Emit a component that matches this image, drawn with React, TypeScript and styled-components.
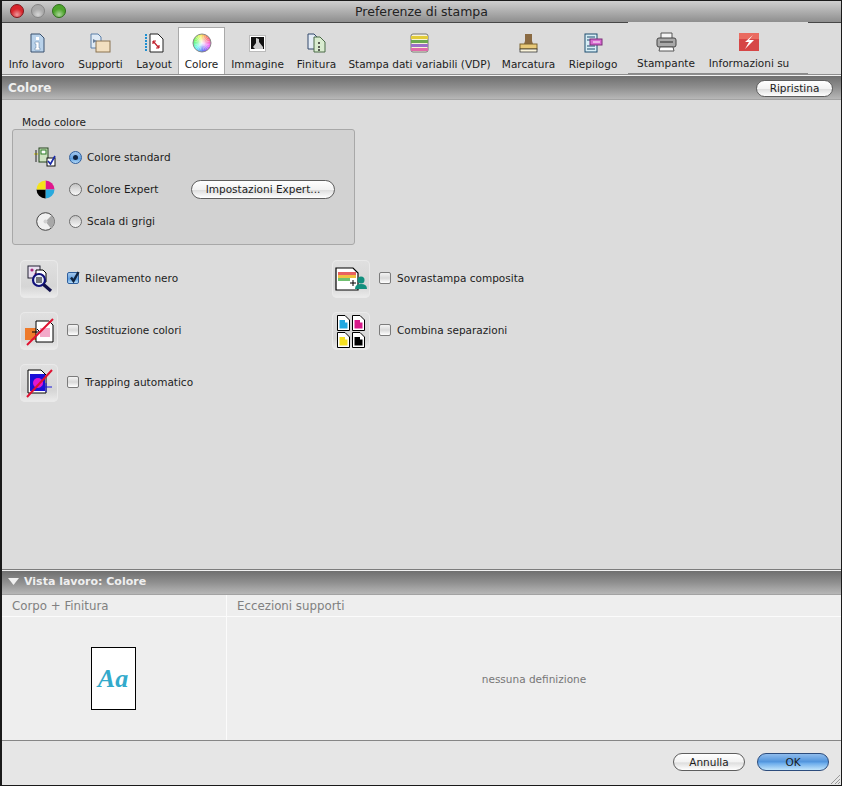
import React from 'react';
import styled, { createGlobalStyle } from 'styled-components';

const GlobalStyle = createGlobalStyle`
  html, body { margin: 0; padding: 0; background: #000; }
  body { font-family: "DejaVu Sans", "Liberation Sans", sans-serif; font-size: 10.5px; color: #1c1c1c; }
`;

const Window = styled.div`
  width: 842px;
  height: 786px;
  box-sizing: border-box;
  display: flex;
  flex-direction: column;
  border: solid #1a1a1a;
  border-width: 1px 1px 1px 2px;
  background: #dcdcdc;
  overflow: hidden;
`;

const TitleBar = styled.div`
  position: relative;
  flex: 0 0 22px;
  box-sizing: border-box;
  display: flex;
  align-items: center;
  justify-content: center;
  background: linear-gradient(#cfcfcf, #a8a8a8 60%, #8e8e8e);
  border-bottom: 1px solid #474747;
  font-size: 12.5px;
  color: #222;
`;

const Lights = styled.div`
  position: absolute;
  left: 8px;
  top: 3px;
  display: flex;
  gap: 7px;
`;

const Light = styled.span<{ $c: string; $d: string }>`
  width: 14px;
  height: 14px;
  border-radius: 50%;
  box-sizing: border-box;
  border: 1px solid ${p => p.$d};
  background: radial-gradient(circle at 50% 80%, #fff8 0, transparent 50%), ${p => p.$c};
`;

const Toolbar = styled.div`
  flex: 0 0 52px;
  box-sizing: border-box;
  display: flex;
  background: #dcdcdc;
  border-bottom: 1px solid #8e8e8e;
`;

const Tab = styled.div<{ $active?: boolean; $w: number }>`
  width: ${p => p.$w}px;
  display: flex;
  flex-direction: column;
  align-items: center;
  box-sizing: border-box;
  margin-top: ${p => (p.$active ? 4 : 0)}px;
  padding-top: ${p => (p.$active ? 4 : 9)}px;
  white-space: nowrap;
  ${p => p.$active && 'background: #fff; border: solid #a9a9a9; border-width: 1px 1px 0;'}
`;

const TabIcon = styled.div`
  height: 22px;
  display: flex;
  align-items: center;
  justify-content: center;
`;

const TabLabel = styled.div`
  line-height: 14px;
  margin-top: 3px;
`;

const PrinterGroup = styled.div`
  position: relative;
  display: flex;
  width: 180px;
  margin-left: 3px;
  margin-top: -1px;
  box-sizing: border-box;
  background: #dcdcdc;
  border-bottom: 1px solid #8a8a8a;
  & ${Tab} { padding-top: 9px; }
`;

const SectionBar = styled.div<{ $h: number; $ruled?: boolean }>`
  position: relative;
  flex: 0 0 ${p => p.$h}px;
  box-sizing: border-box;
  display: flex;
  align-items: center;
  justify-content: space-between;
  padding: ${p => (p.$ruled ? 0 : 1)}px 8px 0 6px;
  background: linear-gradient(#6f6f6f, #8f8f8f 50%, #b7b7b7);
  border-top: 1px solid #f2f2f2;
  border-bottom: 1px solid #a3a3a3;
  ${p => p.$ruled && 'box-shadow: 0 -1px 0 #7c7c7c;'}
  font-weight: bold;
  font-size: 12px;
  color: #efefef;
`;

const BarTitle = styled.span`
  display: flex;
  align-items: center;
  gap: 5px;
  font-size: 11px;
  padding-bottom: 2px;
`;

const PillButton = styled.button<{ $w: number; $h?: number; $primary?: boolean }>`
  width: ${p => p.$w}px;
  height: ${p => p.$h ?? 18}px;
  padding: 0;
  font: 10.5px "DejaVu Sans", sans-serif;
  color: #1c1c1c;
  border-radius: 10px;
  border: 1px solid ${p => (p.$primary ? '#2c4c7c' : '#5e5e5e')};
  background: ${p =>
    p.$primary
      ? 'linear-gradient(#8fbcec, #4f93dc 50%, #66a8ea 55%, #c0e4fb)'
      : 'linear-gradient(#ffffff, #f2f2f2 50%, #dedede 55%, #ffffff)'};
`;

const Main = styled.div`
  flex: 1;
  padding: 15px 0 0 10px;
  display: flex;
  flex-direction: column;
`;

const GroupLabel = styled.div`
  margin-left: 10px;
  line-height: 14px;
`;

const GroupBox = styled.div`
  width: 343px;
  height: 116px;
  box-sizing: border-box;
  padding: 16px 0 0 18px;
  background: #d2d2d2;
  border: 1px solid #a8a8a8;
  border-radius: 3px;
  display: flex;
  flex-direction: column;
  gap: 10px;
`;

const ModeRow = styled.div`
  height: 22px;
  display: flex;
  align-items: center;
`;

const ModeIcon = styled.div`
  width: 28px;
  display: flex;
  justify-content: center;
  margin-right: 10px;
`;

const Radio = styled.span<{ $on?: boolean }>`
  position: relative;
  width: 13px;
  height: 13px;
  border-radius: 50%;
  box-sizing: border-box;
  border: 1px solid ${p => (p.$on ? '#2f5f9e' : '#6d6d6d')};
  background: ${p =>
    p.$on ? 'linear-gradient(#a5c8ec, #5f9fe0 60%, #b6dcf8)' : 'linear-gradient(#c4c4c4, #f8f8f8)'};
  margin-right: 5px;
  &::after {
    content: '';
    display: ${p => (p.$on ? 'block' : 'none')};
    position: absolute;
    left: 3px;
    top: 3px;
    width: 5px;
    height: 5px;
    border-radius: 50%;
    background: #10233f;
  }
`;

const ModeLabel = styled.span`
  width: 104px;
`;

const Options = styled.div`
  margin: 15px 0 0 8px;
  display: grid;
  grid-template-columns: 312px 1fr;
  row-gap: 14px;
`;

const Option = styled.div`
  display: flex;
  align-items: center;
  height: 38px;
`;

const OptionText = styled.div`
  display: flex;
  align-items: center;
  padding-bottom: 2px;
`;

const Well = styled.div`
  width: 38px;
  height: 38px;
  margin-right: 9px;
  display: flex;
  align-items: center;
  justify-content: center;
  border-radius: 5px;
  background: linear-gradient(#e0e0e0, #d6d6d6 70%, #ececec);
  box-shadow: inset 0 0 0 1px #e9e9e9;
`;

const Check = styled.span<{ $on?: boolean }>`
  position: relative;
  width: 12px;
  height: 12px;
  box-sizing: border-box;
  margin-right: 6px;
  border: 1px solid ${p => (p.$on ? '#2f5f9e' : '#7b7b7b')};
  border-radius: 2px;
  background: ${p =>
    p.$on ? 'linear-gradient(#a5c8ec, #5f9fe0 60%, #b6dcf8)' : 'linear-gradient(#f4f4f4, #d9d9d9 50%, #fff)'};
  & svg { position: absolute; left: 0; top: -3px; }
`;

const Preview = styled.div`
  flex: 0 0 145px;
  display: grid;
  grid-template-columns: 225px 1fr;
  grid-template-rows: 22px 1fr;
  background: #eeeeee;
`;

const HeadCell = styled.div`
  padding-left: 10px;
  line-height: 22px;
  font-size: 11.8px;
  color: #808080;
  border-bottom: 1px solid #fbfbfb;
  border-right: 1px solid #fbfbfb;
  &:nth-child(2) { border-right: 0; }
`;

const PageCell = styled.div`
  display: flex;
  align-items: center;
  justify-content: center;
  padding-right: 2px;
  border-right: 1px solid #fbfbfb;
`;

const Page = styled.div`
  width: 45px;
  height: 63px;
  box-sizing: border-box;
  border: 1px solid #000;
  background: #fff;
  display: flex;
  align-items: center;
  justify-content: center;
  font: italic bold 26px "Liberation Serif", serif;
  color: #33aacb;
`;

const EmptyCell = styled.div`
  display: flex;
  align-items: center;
  justify-content: center;
  color: #777;
`;

const Footer = styled.div`
  position: relative;
  flex: 0 0 45px;
  box-sizing: border-box;
  display: flex;
  justify-content: flex-end;
  align-items: flex-start;
  gap: 12px;
  padding: 12px 12px 0 0;
  background: #e6e6e6;
  border-top: 1px solid #868686;
`;

const Grip = styled.svg`
  position: absolute;
  right: 0;
  bottom: 0;
`;

const tick = (
  <svg width="14" height="14" viewBox="0 0 14 14">
    <path d="M3 7.5 L5.5 11 L10.5 2" fill="none" stroke="#10233f" strokeWidth="2.4" />
  </svg>
);

const Doc = ({ x, y, fill }: { x: number; y: number; fill: string }) => (
  <g transform={`translate(${x} ${y})`}>
    <path d="M.5.5H8L12.5 5V15.5H.5Z" fill="#fff" stroke="#000" />
    <path d="M2.5 5H8V7.5H10.5V13.5H2.5Z" fill={fill} />
  </g>
);

// colour wheel sectors, hue runs backwards from orange at the top
const wheelSectors = Array.from({ length: 24 }, (_, i) => {
  const a0 = ((i * 15 - 90) * Math.PI) / 180;
  const a1 = (((i + 1) * 15 - 90) * Math.PI) / 180;
  const d = `M10 10L${10 + 9 * Math.cos(a0)} ${10 + 9 * Math.sin(a0)}A9 9 0 0 1 ${10 + 9 * Math.cos(a1)} ${10 + 9 * Math.sin(a1)}Z`;
  return <path key={i} d={d} fill={`hsl(${40 - i * 15} 90% 65%)`} />;
});

const icons = {
  info: (
    <svg width="18" height="20" viewBox="0 0 18 20">
      <path d="M3 1H12L16 5V19H3Z" fill="#b9d2ea" stroke="#38506e" />
      <rect x="8" y="4" width="3" height="3" fill="#fff" />
      <path d="M7 9H11V15H12V17H7V15H8V11H7Z" fill="#fff" stroke="#5c7ea3" strokeWidth=".5" />
    </svg>
  ),
  media: (
    <svg width="21" height="20" viewBox="0 0 21 20">
      <path d="M1 1H8L11 4V15H1Z" fill="#dfeaf5" stroke="#5b7fa8" />
      <rect x="6" y="8" width="14" height="11" fill="#f2dfc0" stroke="#8a7350" />
      <path d="M3 6L7 8L3 10Z" fill="#6a7f9a" />
    </svg>
  ),
  layout: (
    <svg width="19" height="20" viewBox="0 0 19 20">
      <path d="M1 1V18" stroke="#1f8fd0" strokeWidth="2" strokeDasharray="2 1" />
      <path d="M5 1H13L18 6V19H5Z" fill="#fff" stroke="#222" />
      <path d="M8 8L14 15M8 8V11M8 8H11M14 15V12M14 15H11" stroke="#c0202c" strokeWidth="1.2" fill="none" />
    </svg>
  ),
  color: (
    <svg width="20" height="20" viewBox="0 0 20 20">
      <defs>
        <radialGradient id="pale">
          <stop offset="0" stopColor="#fff" stopOpacity=".9" />
          <stop offset="1" stopColor="#fff" stopOpacity="0" />
        </radialGradient>
      </defs>
      {wheelSectors}
      <circle cx="10" cy="10" r="9" fill="url(#pale)" stroke="#8a8a8a" />
    </svg>
  ),
  image: (
    <svg width="17" height="17" viewBox="0 0 17 17">
      <rect x=".5" y=".5" width="16" height="16" fill="#fff" stroke="#bbb" />
      <rect x="2" y="2" width="13" height="12" fill="#111" />
      <path d="M7 3L10 4L10 7L14 12V14H6L4 12L7 8Z" fill="#ccc" />
    </svg>
  ),
  finish: (
    <svg width="19" height="20" viewBox="0 0 19 20">
      <path d="M1 1H7L10 4V16H1Z" fill="#e4ecf6" stroke="#33486a" />
      <path d="M7 4H13L18 9V19H7Z" fill="#d9ecd0" stroke="#4a6a46" />
      <path d="M12 9V11M12 13V15M12 16V18" stroke="#222" strokeWidth="1.4" />
    </svg>
  ),
  vdp: (
    <svg width="19" height="20" viewBox="0 0 19 20">
      <rect x="1" y="1" width="17" height="18" rx="2" fill="#f7f3d8" stroke="#777" />
      <rect x="1" y="3" width="17" height="3" fill="#e2cc3a" />
      <rect x="1" y="7" width="17" height="3" fill="#6aa84f" />
      <rect x="1" y="11" width="17" height="3" fill="#9a6fc8" />
      <rect x="1" y="15" width="17" height="3" fill="#e06aa8" />
    </svg>
  ),
  stamp: (
    <svg width="19" height="20" viewBox="0 0 19 20">
      <path d="M6 1H13V8L14 11H5L6 8Z" fill="#8a6a42" />
      <rect x="1" y="11" width="17" height="5" fill="#e8c978" stroke="#7d6530" />
      <rect x="1" y="16" width="17" height="3" fill="#fbf5dc" stroke="#222" strokeWidth=".7" />
    </svg>
  ),
  summary: (
    <svg width="19" height="20" viewBox="0 0 19 20">
      <rect x="1" y="1" width="12" height="18" fill="#d8eef5" stroke="#1d4c6e" />
      <path d="M3 4H11M3 7H8M3 13H11M3 16H11" stroke="#1d4c6e" />
      <rect x="6" y="6" width="12" height="6" fill="#d86ad0" stroke="#7a2c78" />
      <path d="M9 9H16" stroke="#fff" />
    </svg>
  ),
  printer: (
    <svg width="21" height="20" viewBox="0 0 21 20">
      <path d="M5 7V1H16V7" fill="#f4f4f4" stroke="#555" />
      <rect x="1" y="6" width="19" height="9" rx="2" fill="#a9a9a9" stroke="#444" />
      <path d="M4 10H17" stroke="#555" strokeWidth="1.5" />
      <path d="M4 15H17L18 19H3Z" fill="#fff" stroke="#555" />
    </svg>
  ),
  about: (
    <svg width="20" height="18" viewBox="0 0 20 18">
      <rect x="0" y="0" width="20" height="18" fill="#d64646" />
      <rect x="0" y="0" width="20" height="6" fill="#ea6b60" />
      <path d="M14 2L6 9H10L6 16L15 7H10Z" fill="#fff" />
    </svg>
  ),
  standard: (
    <svg width="22" height="20" viewBox="0 0 22 20">
      <path d="M0 7H4" stroke="#d8d020" strokeWidth="1.2" />
      <path d="M2 3V15" stroke="#222" />
      <rect x="5" y="1" width="9" height="14" fill="#cfe3c2" stroke="#24451c" />
      <rect x="7" y="3" width="5" height="4" fill="#fff" stroke="#2a7a22" />
      <rect x="13" y="11" width="8" height="8" fill="#fff" stroke="#111" />
      <path d="M14 14L16.5 17L21 9" stroke="#1a2aa8" strokeWidth="1.6" fill="none" />
    </svg>
  ),
  cmyk: (
    <svg width="19" height="19" viewBox="0 0 19 19">
      <path d="M9.5 9.5V.5A9 9 0 0 1 18.5 9.5Z" fill="#e0168c" />
      <path d="M9.5 9.5H18.5A9 9 0 0 1 9.5 18.5Z" fill="#29a9dd" />
      <path d="M9.5 9.5V18.5A9 9 0 0 1 .5 9.5Z" fill="#000" />
      <path d="M9.5 9.5H.5A9 9 0 0 1 9.5 .5Z" fill="#f5e31a" />
    </svg>
  ),
  gray: (
    <svg width="19" height="19" viewBox="0 0 19 19">
      <circle cx="9.5" cy="9.5" r="8.8" fill="#f0f0f0" stroke="#444" />
      <path d="M9.5 9.5L15.7 3.3A8.8 8.8 0 0 1 15 16.4Z" fill="#a8a8a8" />
      <circle cx="9.5" cy="9.5" r="2" fill="#d0d0d0" />
    </svg>
  ),
  black: (
    <svg width="28" height="28" viewBox="0 0 28 28">
      <rect x="3" y="1" width="12" height="12" fill="#e9dff0" stroke="#223" />
      <circle cx="7" cy="5" r="1.6" fill="#a8287c" />
      <circle cx="11" cy="9" r="1.6" fill="#a8287c" />
      <path d="M11 5H18L21 8V17H11Z" fill="#fff" stroke="#000" />
      <circle cx="14" cy="15" r="6" fill="#e8eef8" stroke="#10107a" strokeWidth="2.2" />
      <path d="M11 13H17M11 15H17M11 17H17" stroke="#000" />
      <path d="M18.5 19.5L26 26" stroke="#10104a" strokeWidth="3.2" />
    </svg>
  ),
  substitute: (
    <svg width="32" height="30" viewBox="0 0 32 30">
      <rect x="2" y="12" width="14" height="12" fill="#ee7a2a" />
      <path d="M13 5H26L30 9V26H13Z" fill="#fff" stroke="#000" />
      <rect x="17" y="12" width="10" height="9" fill="#f3a9c9" />
      <path d="M9 16H17M14 13L17 16L14 19" stroke="#000" fill="none" />
      <path d="M4 29L30 3" stroke="#e01030" strokeWidth="2" />
    </svg>
  ),
  trapping: (
    <svg width="28" height="32" viewBox="0 0 28 32">
      <path d="M3 3H16L21 8V26H3Z" fill="#fff" stroke="#000" />
      <rect x="5" y="7" width="15" height="17" fill="#1a10d8" />
      <circle cx="13" cy="16" r="5" fill="#e018d0" />
      <path d="M16 20H27M21 16V25" stroke="#1a1ad8" />
      <path d="M2 30L27 3" stroke="#e01030" strokeWidth="2" />
    </svg>
  ),
  overprint: (
    <svg width="32" height="28" viewBox="0 0 32 28">
      <path d="M1 3H18L23 8V25H1Z" fill="#fff" stroke="#000" strokeWidth="1.2" />
      <rect x="3" y="7" width="18" height="3" fill="#e86060" />
      <rect x="3" y="10" width="18" height="3" fill="#f0c040" />
      <rect x="3" y="13" width="12" height="3" fill="#70c070" />
      <path d="M15 18H21M18 15V21" stroke="#000" />
      <circle cx="26" cy="15" r="3.5" fill="#12907e" />
      <path d="M20 24Q20 19 26 19Q32 19 32 24Z" fill="#12907e" />
    </svg>
  ),
  combine: (
    <svg width="30" height="34" viewBox="0 0 30 34">
      <Doc x={1} y={1} fill="#22a8e0" />
      <Doc x={16} y={1} fill="#d81a8a" />
      <Doc x={1} y={18} fill="#f5e020" />
      <Doc x={16} y={18} fill="#000" />
    </svg>
  ),
};

const App = () => (
  <>
    <GlobalStyle />
    <Window>
      <TitleBar>
        <Lights>
          <Light $c="#d8252c" $d="#7d1a1e" />
          <Light $c="#a9a9a9" $d="#858585" />
          <Light $c="#4ea52c" $d="#2f6e1e" />
        </Lights>
        Preferenze di stampa
      </TitleBar>
      <Toolbar>
        <Tab $w={69}><TabIcon>{icons.info}</TabIcon><TabLabel>Info lavoro</TabLabel></Tab>
        <Tab $w={59}><TabIcon>{icons.media}</TabIcon><TabLabel>Supporti</TabLabel></Tab>
        <Tab $w={48}><TabIcon>{icons.layout}</TabIcon><TabLabel>Layout</TabLabel></Tab>
        <Tab $w={47} $active><TabIcon>{icons.color}</TabIcon><TabLabel>Colore</TabLabel></Tab>
        <Tab $w={65}><TabIcon>{icons.image}</TabIcon><TabLabel>Immagine</TabLabel></Tab>
        <Tab $w={53}><TabIcon>{icons.finish}</TabIcon><TabLabel>Finitura</TabLabel></Tab>
        <Tab $w={153}><TabIcon>{icons.vdp}</TabIcon><TabLabel>Stampa dati variabili (VDP)</TabLabel></Tab>
        <Tab $w={65}><TabIcon>{icons.stamp}</TabIcon><TabLabel>Marcatura</TabLabel></Tab>
        <Tab $w={64}><TabIcon>{icons.summary}</TabIcon><TabLabel>Riepilogo</TabLabel></Tab>
        <PrinterGroup>
          <Tab $w={76}><TabIcon>{icons.printer}</TabIcon><TabLabel>Stampante</TabLabel></Tab>
          <Tab $w={90}><TabIcon>{icons.about}</TabIcon><TabLabel>Informazioni su</TabLabel></Tab>
        </PrinterGroup>
      </Toolbar>
      <SectionBar $h={25}>
        Colore
        <PillButton $w={77} $h={17}>Ripristina</PillButton>
      </SectionBar>
      <Main>
        <GroupLabel>Modo colore</GroupLabel>
        <GroupBox>
          <ModeRow>
            <ModeIcon>{icons.standard}</ModeIcon>
            <Radio $on />
            <ModeLabel>Colore standard</ModeLabel>
          </ModeRow>
          <ModeRow>
            <ModeIcon>{icons.cmyk}</ModeIcon>
            <Radio />
            <ModeLabel>Colore Expert</ModeLabel>
            <PillButton $w={144} $h={19}>Impostazioni Expert...</PillButton>
          </ModeRow>
          <ModeRow>
            <ModeIcon>{icons.gray}</ModeIcon>
            <Radio />
            <ModeLabel>Scala di grigi</ModeLabel>
          </ModeRow>
        </GroupBox>
        <Options>
          <Option><Well>{icons.black}</Well><OptionText><Check $on>{tick}</Check>Rilevamento nero</OptionText></Option>
          <Option><Well>{icons.overprint}</Well><OptionText><Check />Sovrastampa composita</OptionText></Option>
          <Option><Well>{icons.substitute}</Well><OptionText><Check />Sostituzione colori</OptionText></Option>
          <Option><Well>{icons.combine}</Well><OptionText><Check />Combina separazioni</OptionText></Option>
          <Option><Well>{icons.trapping}</Well><OptionText><Check />Trapping automatico</OptionText></Option>
        </Options>
      </Main>
      <SectionBar $h={25} $ruled>
        <BarTitle>
          <svg width="11" height="7" viewBox="0 0 11 7"><path d="M0 0H11L5.5 7Z" fill="#f0f0f0" /></svg>
          Vista lavoro: Colore
        </BarTitle>
      </SectionBar>
      <Preview>
        <HeadCell>Corpo + Finitura</HeadCell>
        <HeadCell>Eccezioni supporti</HeadCell>
        <PageCell><Page>Aa</Page></PageCell>
        <EmptyCell>nessuna definizione</EmptyCell>
      </Preview>
      <Footer>
        <PillButton $w={72}>Annulla</PillButton>
        <PillButton $w={72} $primary>OK</PillButton>
        <Grip width="12" height="12" viewBox="0 0 12 12">
          <path d="M11 2L2 11M11 6L6 11M11 9L9 11" stroke="#9a9a9a" />
        </Grip>
      </Footer>
    </Window>
  </>
);

export default App;
